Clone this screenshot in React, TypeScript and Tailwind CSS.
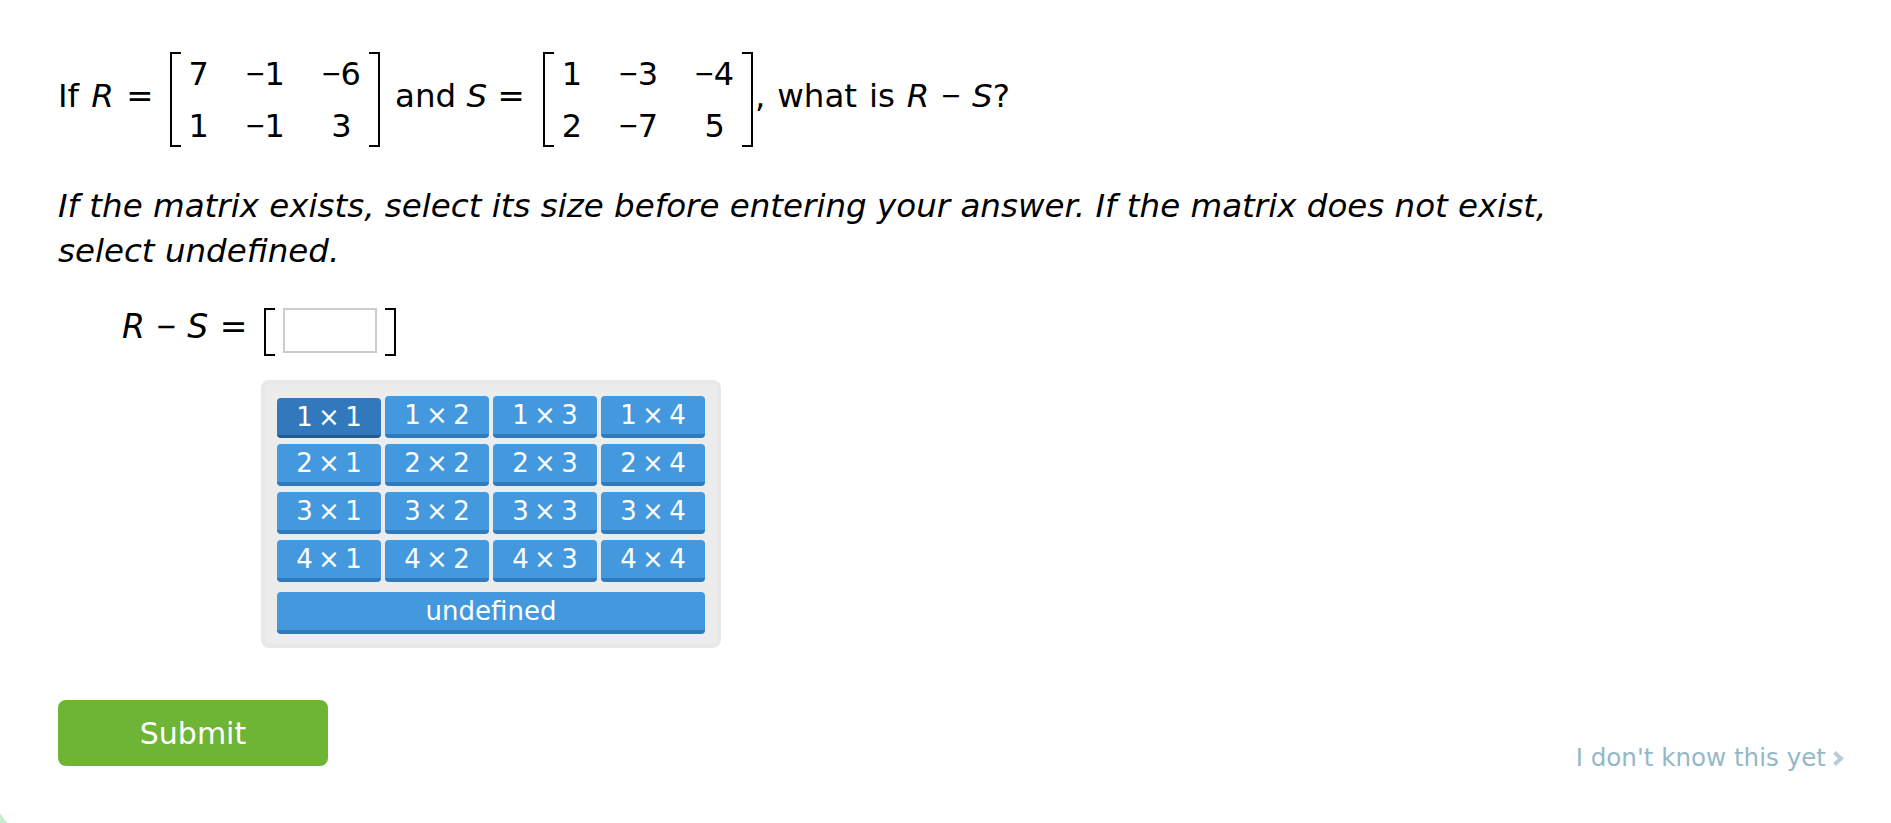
const sans = 'font-["DejaVu_Sans",Verdana,sans-serif]';

function Minus() {
  return <span className='font-["Liberation_Sans",sans-serif]'>−</span>;
}

function Bracket({ side, className }: { side: 'left' | 'right'; className: string }) {
  return (
    <div
      className={
        (side === 'left' ? 'border-l-2 ' : 'border-r-2 ') +
        'w-[11px] border-y-2 border-black ' +
        className
      }
    />
  );
}

function Matrix({ rows }: { rows: (string | number)[][] }) {
  return (
    <div className="flex h-[95px] items-stretch">
      <Bracket side="left" className="" />
      <div className="grid grid-cols-[auto_auto_auto] content-center justify-items-center gap-x-[37px] gap-y-[8px] px-[8px] text-[32px] leading-[44px]">
        {rows.flat().map((v, i) => (
          <span key={i}>
            {typeof v === 'number' && v < 0 ? (
              <>
                <Minus />
                {Math.abs(v)}
              </>
            ) : (
              v
            )}
          </span>
        ))}
      </div>
      <Bracket side="right" className="" />
    </div>
  );
}

function SizeButton({ label, selected, wide }: { label: string; selected?: boolean; wide?: boolean }) {
  const shape = wide ? 'col-span-4 mt-[4px] ' : '';
  if (selected) {
    return (
      <button className={shape + 'mt-[2px] h-[40px] rounded-[4px] border-b-[3px] border-[#255a8e] bg-[#3278bd] text-[26px] leading-[36px] text-white [word-spacing:-3px]'}>
        {label}
      </button>
    );
  }
  return (
    <button className={shape + 'h-[42px] rounded-[4px] border-b-[4px] border-[#3278bd] bg-[#4499de] text-[26px] leading-[36px] text-white [word-spacing:-3px]'}>
      {label}
    </button>
  );
}

export default function App() {
  const sizes = [1, 2, 3, 4];
  return (
    <div className={sans + ' relative h-[823px] w-[1891px] overflow-hidden bg-white text-black'}>
      <div className="px-[58px] pt-[52px]">
        <div className="flex items-center text-[32.5px] leading-[44px]">
          <span className="mr-[16px] mb-[8px] whitespace-pre [word-spacing:2px]">
            If <i>R</i> =
          </span>
          <Matrix rows={[[7, -1, -6], [1, -1, 3]]} />
          <span className="mr-[18px] mb-[8px] ml-[15px] whitespace-pre">
            and <i>S</i> =
          </span>
          <Matrix rows={[[1, -3, -4], [2, -7, 5]]} />
          <span className="mb-[8px] ml-[2px] whitespace-pre [word-spacing:1.5px]">
            , what is <i>R</i> <Minus /> <i>S</i>?
          </span>
        </div>
        <p className="mt-[37px] w-[1560px] text-[32.5px] leading-[45px] italic">
          If the matrix exists, select its size before entering your answer. If the matrix does not exist, select undefined.
        </p>
        <div className="mt-[34px] ml-[64px] flex items-start text-[33px] leading-[44px]">
          <span className="mt-[-3px] mr-[17px] whitespace-pre [word-spacing:1px]">
            <i>R</i> <Minus /> <i>S</i> =
          </span>
          <div className="flex h-[48px] items-start">
            <Bracket side="left" className="h-[48px]" />
            <input className="mr-[8px] ml-[8px] h-[45px] w-[94px] border-2 border-[#cccccc] bg-white" />
            <Bracket side="right" className="h-[48px]" />
          </div>
        </div>
        <div className="mt-[24px] ml-[203px] w-[460px] rounded-[8px] border-[4px] border-[#e8e8e8] bg-[#ececec] px-[12px] pt-[12px] pb-[10px]">
          <div className="grid grid-cols-4 gap-x-[4px] gap-y-[6px]">
            {sizes.map((r) =>
              sizes.map((c) => (
                <SizeButton key={r + '-' + c} label={r + ' × ' + c} selected={r === 1 && c === 1} />
              )),
            )}
            <SizeButton label="undefined" wide />
          </div>
        </div>
        <div className="mt-[52px] flex items-end justify-between">
          <button className="h-[66px] w-[270px] rounded-[8px] bg-[#6eb435] text-[30px] text-white">Submit</button>
          <a className="mr-[-11px] mb-[-10px] flex items-center text-[24.6px] leading-[36px] text-[#94b8c7]">
            I don't know this yet
            <svg viewBox="0 0 12 15" className="ml-[6px] h-[15px] w-[12px]" fill="none" stroke="#b5cfda" strokeWidth="4">
              <path d="M2.5 1.5l6.5 6-6.5 6" />
            </svg>
          </a>
        </div>
      </div>
      <svg viewBox="0 0 20 10" className="absolute bottom-0 left-0 h-[10px] w-[20px]">
        <path d="M0 0L0 10L8 10Q3 6 0 0Z" fill="#c8eccf" />
      </svg>
    </div>
  );
}
